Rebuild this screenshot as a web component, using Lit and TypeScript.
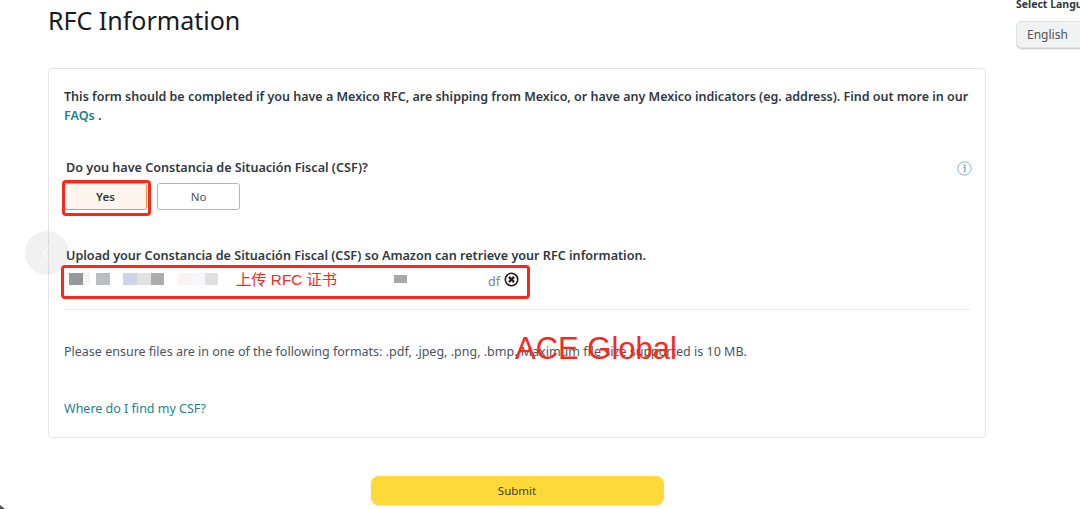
import { LitElement, html, css } from "lit";
import { customElement } from "lit/decorators.js";

// the file name is scrubbed in the reference, these are the leftover blocks
const BLURS = [
  { w: 14, h: 12, c: "#96999b", gap: 0 },
  { w: 7, h: 12, c: "#f6f5f6", gap: 6 },
  { w: 14, h: 12, c: "#b9bec1", gap: 13 },
  { w: 14, h: 12, c: "#c9d5e6", gap: 0 },
  { w: 14, h: 12, c: "#e2e2e0", gap: 0 },
  { w: 13, h: 12, c: "#a9adad", gap: 14 },
  { w: 13, h: 12, c: "#fcf3f1", gap: 0 },
  { w: 14, h: 12, c: "#f6f7fb", gap: 0 },
  { w: 13, h: 12, c: "#e0e0e0", gap: 176 },
  { w: 13, h: 8, c: "#a8a8a8", gap: 0 },
];

@customElement("app-root")
export class AppRoot extends LitElement {
  static styles = css`
    :host {
      display: block;
      position: relative;
      height: 509px;
      overflow: hidden;
      background: #fff;
      font-family: "Noto Sans", "Liberation Sans", sans-serif;
      color: #2f3841;
    }
    .page {
      display: flex;
      height: 100%;
    }
    .main {
      width: 938px;
      margin-left: 48px;
      display: flex;
      flex-direction: column;
    }
    h1 {
      margin: 0;
      height: 68px;
      padding-top: 3px;
      box-sizing: border-box;
      font-size: 25px;
      line-height: 34px;
      font-weight: 400;
      color: #16191f;
    }
    .card {
      height: 370px;
      box-sizing: border-box;
      border: 1px solid #e3e5e6;
      border-radius: 4px;
      padding: 19px 15px 0;
      display: flex;
      flex-direction: column;
    }
    .intro {
      margin: 0;
      font-size: 12.5px;
      line-height: 18.5px;
      font-weight: 600;
    }
    a {
      color: #1d7f8f;
      text-decoration: none;
    }
    .question {
      margin-top: 34px;
      padding-left: 2px;
      display: flex;
      justify-content: space-between;
      align-items: center;
      font-size: 12.6px;
      line-height: 18px;
      font-weight: 600;
    }
    .info {
      margin-right: -2px;
      display: block;
    }
    .choices {
      display: flex;
      gap: 10px;
      margin-top: 6px;
    }
    .choice {
      width: 83px;
      height: 27px;
      box-sizing: border-box;
      border: 1px solid #b3b6b9;
      border-radius: 3px;
      background: #fff;
      font: inherit;
      font-size: 11.5px;
      color: #4b545c;
      padding: 0;
    }
    .choice.on {
      background: #fdf5ee;
      border-color: #e8964a;
      color: #2f3841;
      font-weight: 600;
    }
    .upload {
      margin-top: 37px;
      padding-left: 2px;
      font-size: 12.6px;
      line-height: 18px;
      font-weight: 600;
    }
    .file {
      margin-top: 3px;
      height: 26px;
      padding-left: 5px;
      display: flex;
      align-items: center;
      font-size: 12.5px;
      color: #7d8388;
    }
    .blur {
      margin-top: -5px;
      flex: none;
    }
    .ext {
      margin-left: 81px;
    }
    .remove {
      margin-left: 4px;
      margin-top: -4px;
      display: block;
    }
    hr {
      width: 100%;
      margin: 15px 0 0;
      border: 0;
      border-top: 1px solid #e6e7e8;
    }
    .formats {
      margin: 33px 0 0;
      font-size: 12.5px;
      line-height: 18px;
      color: #4b545c;
    }
    .where {
      margin-top: 39px;
      font-size: 12.5px;
      line-height: 18px;
    }
    .actions {
      margin-top: 38px;
      display: flex;
      justify-content: center;
    }
    .submit {
      width: 293px;
      height: 29px;
      border: 0;
      border-radius: 8px;
      background: #ffd83a;
      box-shadow: 0 1px 2px rgba(0, 0, 0, 0.12);
      font: inherit;
      font-size: 11.5px;
      color: #3c3f33;
      padding: 0;
    }
    .lang {
      margin-left: 30px;
      flex: none;
      width: 64px;
      overflow: hidden;
      white-space: nowrap;
    }
    .lang-label {
      margin-top: -4px;
      font-size: 10.5px;
      line-height: 16px;
      font-weight: 700;
    }
    .lang-box {
      margin-top: 9px;
      width: 90px;
      height: 27px;
      box-sizing: border-box;
      padding-left: 10px;
      border: 1px solid #dfe2e2;
      border-radius: 6px;
      background: #f1f3f3;
      box-shadow: 0 1px 2px rgba(0, 0, 0, 0.25);
      font-size: 12px;
      line-height: 25px;
      color: #4b545c;
    }
    .mark {
      position: absolute;
      box-sizing: border-box;
      border: 3px solid #f5291c;
      border-radius: 4px;
    }
    .mark.yes {
      left: 62px;
      top: 180px;
      width: 89px;
      height: 36px;
    }
    .mark.file-box {
      left: 61px;
      top: 265px;
      width: 469px;
      height: 34px;
    }
    .note {
      position: absolute;
      color: #f5291c;
      white-space: nowrap;
    }
    .note.cn {
      left: 236px;
      top: 270px;
      font-size: 15.3px;
      line-height: 20px;
      font-family: "Liberation Sans", "Noto Sans CJK SC", sans-serif;
    }
    .note.ace {
      left: 515px;
      top: 329px;
      font-size: 31px;
      line-height: 40px;
      font-family: "Liberation Sans", sans-serif;
    }
    .back {
      position: absolute;
      left: 25px;
      top: 231px;
      width: 44px;
      height: 44px;
      border-radius: 50%;
      background: rgba(120, 120, 120, 0.1);
    }
    .back svg {
      display: block;
      margin: 14px 0 0 14px;
    }
    .corner {
      position: absolute;
      left: 0;
      bottom: 0;
      width: 0;
      height: 0;
      border-left: 5px solid #55504c;
      border-top: 4px solid transparent;
    }
  `;

  render() {
    return html`
      <div class="page">
        <div class="main">
          <h1>RFC Information</h1>
          <div class="card">
            <p class="intro">
              This form should be completed if you have a Mexico RFC, are
              shipping from Mexico, or have any Mexico indicators (eg. address).
              Find out more in our <a href="#">FAQs</a> .
            </p>
            <div class="question">
              <span>Do you have Constancia de Situación Fiscal (CSF)?</span>
              <svg class="info" width="15" height="15" viewBox="0 0 15 15">
                <circle cx="7.5" cy="7.5" r="6.7" fill="none" stroke="#7fb6d6" stroke-width="1" />
                <circle cx="7.8" cy="4.4" r="0.9" fill="#4d93bd" />
                <path d="M6.4 6.6h1.9l-.9 4h1.1" fill="none" stroke="#4d93bd" stroke-width="1" />
              </svg>
            </div>
            <div class="choices">
              <button class="choice on">Yes</button>
              <button class="choice">No</button>
            </div>
            <div class="upload">
              Upload your Constancia de Situación Fiscal (CSF) so Amazon can
              retrieve your RFC information.
            </div>
            <div class="file">
              ${BLURS.map(
                (b) =>
                  html`<span
                    class="blur"
                    style="width:${b.w}px;height:${b.h}px;background:${b.c};margin-right:${b.gap}px"
                  ></span>`
              )}
              <span class="ext">df</span>
              <svg class="remove" width="15" height="15" viewBox="0 0 15 15">
                <circle cx="7.5" cy="7.5" r="6.2" fill="none" stroke="#1c1c1c" stroke-width="1.6" />
                <path d="M4.9 4.9l5.2 5.2M10.1 4.9l-5.2 5.2" stroke="#1c1c1c" stroke-width="2.2" />
              </svg>
            </div>
            <hr />
            <p class="formats">
              Please ensure files are in one of the following formats: .pdf,
              .jpeg, .png, .bmp. Maximum file size supported is 10 MB.
            </p>
            <div class="where"><a href="#">Where do I find my CSF?</a></div>
          </div>
          <div class="actions"><button class="submit">Submit</button></div>
        </div>
        <div class="lang">
          <div class="lang-label">Select Language</div>
          <div class="lang-box">English</div>
        </div>
      </div>
      <div class="back">
        <svg width="16" height="16" viewBox="0 0 16 16">
          <path d="M10 2L4 8l6 6" fill="none" stroke="#fff" stroke-width="1.4" opacity="0.6" />
        </svg>
      </div>
      <div class="mark yes"></div>
      <div class="mark file-box"></div>
      <span class="note cn">上传 RFC 证书</span>
      <span class="note ace">ACE Global</span>
      <div class="corner"></div>
    `;
  }
}
